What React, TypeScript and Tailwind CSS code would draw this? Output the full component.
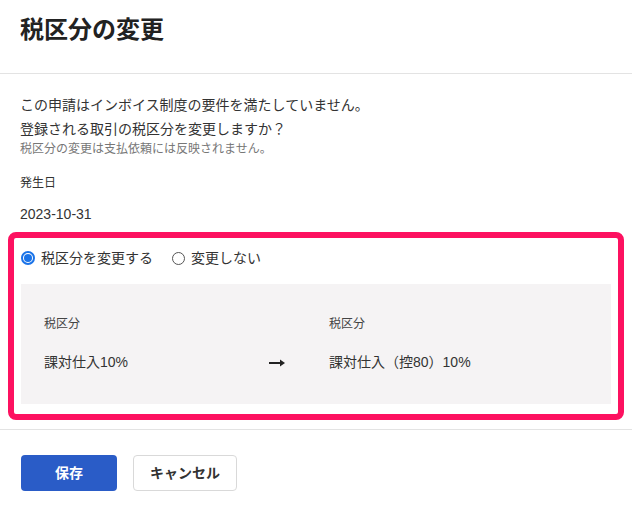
import React, { useState } from "react";

type Choice = "change" | "keep";

const FONT = { fontFamily: '"Liberation Sans", "Noto Sans CJK JP", sans-serif' };

function Radio({ checked, label, onClick }: { checked: boolean; label: string; onClick: () => void }) {
  return (
    <button type="button" onClick={onClick} className="flex items-center gap-[6px] cursor-pointer">
      {checked ? (
        <span className="flex h-[14px] w-[14px] items-center justify-center rounded-full border-2 border-[#1a73e8]">
          <span className="h-[8px] w-[8px] rounded-full bg-[#1a73e8]" />
        </span>
      ) : (
        <span className="h-[13px] w-[13px] rounded-full border border-[#555]" />
      )}
      <span className="text-[14px] leading-[20px] text-[#333]">{label}</span>
    </button>
  );
}

export default function App() {
  const [choice, setChoice] = useState<Choice>("change");

  return (
    <div className="h-[508px] w-[632px] bg-white text-[#333]" style={FONT}>
      {/* header */}
      <div className="border-b border-[#e3e3e3] px-5 pt-[14px] pb-[27px]">
        <h1 className="text-[24px] font-bold leading-[32px] text-[#222]">税区分の変更</h1>
      </div>

      {/* body */}
      <div className="pt-[19px]">
        <div className="px-5">
          <p className="text-[14px] leading-[24px]">この申請はインボイス制度の要件を満たしていません。</p>
          <p className="text-[14px] leading-[24px]">登録される取引の税区分を変更しますか？</p>
          <p className="text-[12px] leading-[16px] text-[#777]">税区分の変更は支払依頼には反映されません。</p>
          <p className="mt-[16px] text-[12px] leading-[20px]">発生日</p>
          <p className="mt-[11px] text-[14px] leading-[20px]">2023-10-31</p>
        </div>

        <div className="mx-2 mt-[8px] rounded-[8px] border-[6px] border-[#fd1160] px-[7px] pt-[10px] pb-[10px]">
          <div className="flex items-center gap-[19px]">
            <Radio checked={choice === "change"} label="税区分を変更する" onClick={() => setChoice("change")} />
            <Radio checked={choice === "keep"} label="変更しない" onClick={() => setChoice("keep")} />
          </div>

          <div className="mt-[16px] grid grid-cols-[225px_60px_1fr] bg-[#f5f3f4] pl-[23px] pt-[31px] pb-[32px]">
            <div>
              <div className="text-[12px] leading-[18px] text-[#444]">税区分</div>
              <div className="mt-[19px] text-[14px] leading-[20px]">課対仕入10%</div>
            </div>
            <div className="flex items-end pb-[5px]">
              <svg width="16" height="8" viewBox="0 0 16 8">
                <rect x="0" y="3" width="12" height="2" fill="#222" />
                <path d="M11 0.5 L16 4 L11 7.5 Z" fill="#222" />
              </svg>
            </div>
            <div>
              <div className="text-[12px] leading-[18px] text-[#444]">税区分</div>
              <div className="mt-[19px] text-[14px] leading-[20px]">課対仕入（控80）10%</div>
            </div>
          </div>
        </div>
      </div>

      {/* footer */}
      <div className="mt-[9px] flex gap-4 border-t border-[#e3e3e3] px-[21px] pt-[25px]">
        <button type="button" className="h-[36px] w-[96px] rounded-[4px] bg-[#2a5cc7] text-[14px] font-bold text-white">
          保存
        </button>
        <button type="button" className="h-[36px] w-[104px] rounded-[4px] border border-[#d9d9d9] bg-white text-[14px] font-bold text-[#333]">
          キャンセル
        </button>
      </div>
    </div>
  );
}
